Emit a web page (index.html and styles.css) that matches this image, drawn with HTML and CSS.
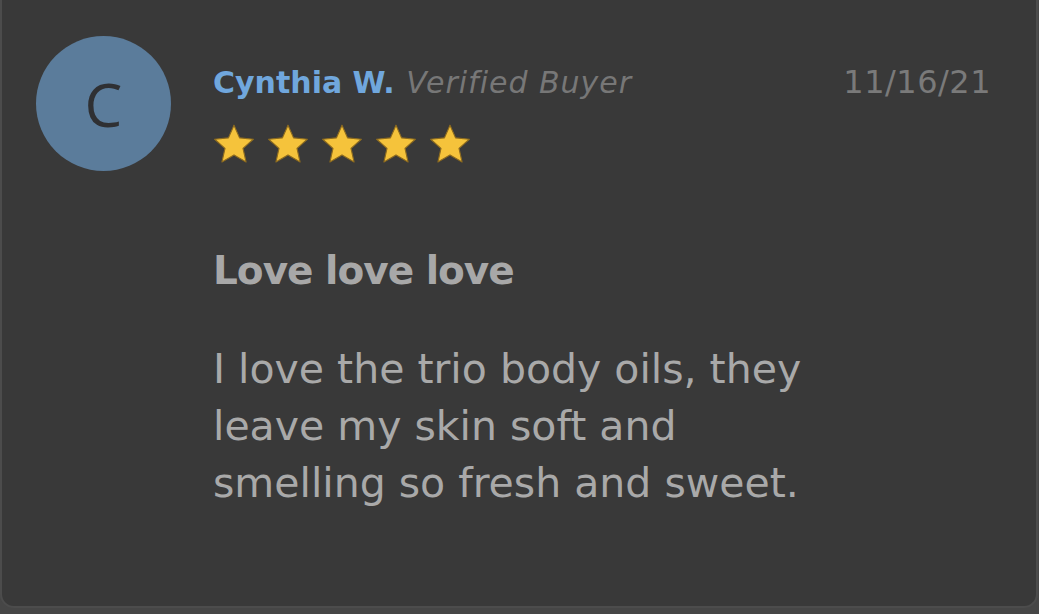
FILE: index.html
```html
<!DOCTYPE html>
<html lang="en">
<head>
<meta charset="UTF-8">
<meta name="viewport" content="width=device-width, initial-scale=1.0">
<title>Review</title>
<link rel="stylesheet" href="styles.css">
</head>
<body>

<div class="reviewCard">
    <div class="avatar">C</div>

    <div class="reviewBody">
        <div class="reviewHeader">
            <div class="reviewer">
                <span class="reviewerName">Cynthia W.</span>
                <span class="verified">Verified Buyer</span>
            </div>
            <div class="reviewDate">11/16/21</div>
        </div>

        <div class="stars">
            <svg viewBox="0 0 24 24"><path d="M12 2.2l2.9 6.6 7.2.7-5.4 4.8 1.6 7.1L12 17.7l-6.3 3.7 1.6-7.1-5.4-4.8 7.2-.7z"/></svg>
            <svg viewBox="0 0 24 24"><path d="M12 2.2l2.9 6.6 7.2.7-5.4 4.8 1.6 7.1L12 17.7l-6.3 3.7 1.6-7.1-5.4-4.8 7.2-.7z"/></svg>
            <svg viewBox="0 0 24 24"><path d="M12 2.2l2.9 6.6 7.2.7-5.4 4.8 1.6 7.1L12 17.7l-6.3 3.7 1.6-7.1-5.4-4.8 7.2-.7z"/></svg>
            <svg viewBox="0 0 24 24"><path d="M12 2.2l2.9 6.6 7.2.7-5.4 4.8 1.6 7.1L12 17.7l-6.3 3.7 1.6-7.1-5.4-4.8 7.2-.7z"/></svg>
            <svg viewBox="0 0 24 24"><path d="M12 2.2l2.9 6.6 7.2.7-5.4 4.8 1.6 7.1L12 17.7l-6.3 3.7 1.6-7.1-5.4-4.8 7.2-.7z"/></svg>
        </div>

        <h3 class="reviewTitle">Love love love</h3>
        <p class="reviewText">I love the trio body oils, they leave my skin soft and smelling so fresh and sweet.</p>
    </div>
</div>

</body>
</html>
```

FILE: styles.css
```css
body {
    margin: 0;
    background-color: #464646;
    font-family: "DejaVu Sans", sans-serif;
}

.reviewCard {
    display: flex;
    height: 608px;
    box-sizing: border-box;
    margin-right: 1px;
    padding: 36px 47px 0 34px;
    background-color: #393939;
    border: 2px solid #4c4c4c;
    border-top: none;
    border-radius: 0 0 14px 14px;
}

.avatar {
    flex: none;
    width: 135px;
    height: 135px;
    border-radius: 50%;
    background-color: #5b7c9b;
    color: #2f3033;
    font-family: "Open Sans", sans-serif;
    font-size: 60px;
    display: flex;
    align-items: center;
    justify-content: center;
}

.reviewBody {
    flex: 1;
    margin-left: 42px;
}

.reviewHeader {
    display: flex;
    justify-content: space-between;
    align-items: baseline;
    margin-top: 28px;
    font-size: 30px;
    line-height: 36px;
}

.reviewerName {
    color: #70a7dd;
    font-weight: bold;
}

.verified {
    color: #777;
    font-style: italic;
    letter-spacing: 1px;
    margin-left: 2px;
}

.reviewDate {
    color: #7a7a7a;
    font-size: 32px;
    letter-spacing: 0.5px;
    margin-right: -2px;
}

.stars {
    display: flex;
    gap: 8px;
    margin: 20px 0 0 -2px;
}

.stars svg {
    width: 46px;
    height: 46px;
    fill: #f5c33b;
    stroke: #8d6b1f;
    stroke-width: 0.6;
    stroke-linejoin: round;
}

.reviewTitle {
    margin: 80px 0 0;
    color: #a8a8a8;
    font-size: 39px;
    font-weight: bold;
    letter-spacing: -1px;
    line-height: 48px;
}

.reviewText {
    margin: 46px 0 0;
    width: 600px;
    color: #a9a9a9;
    font-size: 41px;
    line-height: 57px;
}
```
